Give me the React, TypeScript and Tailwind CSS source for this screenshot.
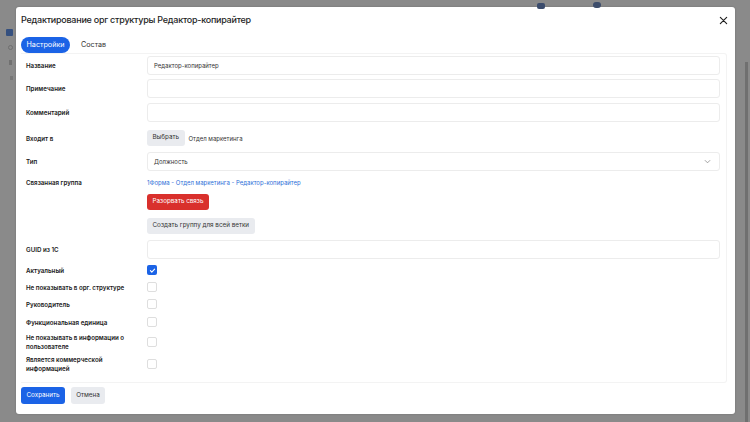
import React from "react";

const font = { fontFamily: "Inter, 'Noto Sans', sans-serif" };

const TextInput = ({ value }: { value?: string }) => (
  <div className="h-[19px] w-full rounded-[3px] border border-[#ececec] flex items-center px-[6px] text-[6px] text-[#333]">
    {value}
  </div>
);

const Check = ({ on }: { on?: boolean }) =>
  on ? (
    <div className="w-[10px] h-[10px] rounded-[2px] bg-[#1b63e6] flex items-center justify-center">
      <svg width="7" height="7" viewBox="0 0 10 10" fill="none">
        <path d="M2 5.2l2 2L8 3" stroke="white" strokeWidth="1.6" strokeLinecap="round" strokeLinejoin="round" />
      </svg>
    </div>
  ) : (
    <div className="w-[10px] h-[10px] rounded-[2px] border border-[#dedede] bg-white" />
  );

const Row = ({
  label,
  h,
  mt,
  children,
  top,
}: {
  label: string;
  h: string;
  mt: string;
  children?: React.ReactNode;
  top?: boolean;
}) => (
  <div className={`grid grid-cols-[126px_1fr] ${h} ${mt} ${top ? "items-start" : "items-center"}`}>
    <div className="pl-[5px] text-[6.2px] font-semibold text-[#1a1a1a] leading-[9px] pr-[10px]">{label}</div>
    <div>{children}</div>
  </div>
);

const Btn = ({ children, tone }: { children: React.ReactNode; tone: "blue" | "red" | "gray" }) => {
  const c =
    tone === "blue"
      ? "bg-[#1b63e6] text-white"
      : tone === "red"
      ? "bg-[#d9302c] text-white"
      : "bg-[#e9ebef] text-[#333]";
  return <div className={`h-[16px] px-[5.5px] rounded-[3px] text-[6.3px] flex items-center ${c}`}>{children}</div>;
};

export default function App() {
  return (
    <div className="w-[750px] h-[422px] bg-[#8a8a8a] relative overflow-hidden" style={font}>
      {/* page behind the overlay */}
      <div className="absolute left-[6px] top-[29px] w-[7px] h-[7px] rounded-[1px] bg-[#35507f]" />
      <div className="absolute left-[8px] top-[45px] w-[5px] h-[5px] rounded-full border border-[#6f6f6f]" />
      <div className="absolute left-[9px] top-[60px] w-[3px] h-[5px] bg-[#707070]" />
      <div className="absolute left-[10px] top-[76px] w-[3px] h-[4px] bg-[#777]" />
      <div className="absolute left-[537px] top-[3px] w-[8px] h-[6px] rounded-[2px] bg-[#3a4b6c]" />
      <div className="absolute left-[593px] top-[2px] w-[8px] h-[6px] rounded-full bg-[#3d4d6b]" />
      <div className="absolute left-[745px] top-[62px] w-[3px] h-[360px] bg-[#707070]" />

      <div className="pl-[16px] pt-[7px] flex">
        <div className="w-[719px] h-[407px] bg-white rounded-[3px] shadow-[0_0_2px_rgba(0,0,0,0.2)] flex flex-col pl-[5px] pr-[8px]">
          <div className="h-[26px] flex items-center justify-between">
            <div className="text-[9px] text-[#1e1e1e] font-medium tracking-[-0.25px]">
              Редактирование орг структуры Редактор-копирайтер
            </div>
            <svg width="9" height="9" viewBox="0 0 10 10" className="mr-[-1px]">
              <path d="M1.5 1.5l7 7M8.5 1.5l-7 7" stroke="#222" strokeWidth="1.3" strokeLinecap="round" />
            </svg>
          </div>

          <div className="mt-[4px] h-[16px] flex items-center gap-[11px]">
            <div className="h-[16px] px-[5.5px] rounded-full bg-[#1b63e6] text-white text-[7.2px] flex items-center">Настройки</div>
            <div className="text-[7.2px] text-[#333]">Состав</div>
          </div>

          <div className="flex flex-col border-t border-r border-b border-[#f3f3f3] rounded-r-[3px] pr-[6px] h-[330px]">
            <Row label="Название" h="h-[19px]" mt="mt-[2px]"><TextInput value="Редактор-копирайтер" /></Row>
            <Row label="Примечание" h="h-[19px]" mt="mt-[4px]"><TextInput /></Row>
            <Row label="Комментарий" h="h-[19px]" mt="mt-[5px]"><TextInput /></Row>
            <Row label="Входит в" h="h-[16px]" mt="mt-[8px]">
              <div className="flex items-center gap-[4px]">
                <Btn tone="gray">Выбрать</Btn>
                <div className="text-[6px] text-[#333]">Отдел маркетинга</div>
              </div>
            </Row>
            <Row label="Тип" h="h-[19px]" mt="mt-[6px]">
              <div className="h-[19px] w-full rounded-[3px] border border-[#ececec] flex items-center justify-between px-[6px] text-[6px] text-[#333]">
                <span>Должность</span>
                <svg width="7" height="5" viewBox="0 0 8 5" className="mr-[2px]">
                  <path d="M1 1l3 3 3-3" stroke="#888" strokeWidth="0.9" fill="none" />
                </svg>
              </div>
            </Row>
            <Row label="Связанная группа" h="h-[57px]" mt="mt-[7px]" top>
              <div className="flex flex-col items-start">
                <div className="text-[6px] text-[#2c6fd8] leading-[9px]">1Форма - Отдел маркетинга - Редактор-копирайтер</div>
                <div className="mt-[7px]"><Btn tone="red">Разорвать связь</Btn></div>
                <div className="mt-[8px]"><Btn tone="gray">Создать группу для всей ветки</Btn></div>
              </div>
            </Row>
            <Row label="GUID из 1С" h="h-[19px]" mt="mt-[5px]"><TextInput /></Row>
            <Row label="Актуальный" h="h-[10px]" mt="mt-[6px]"><Check on /></Row>
            <Row label="Не показывать в орг. структуре" h="h-[10px]" mt="mt-[7px]"><Check /></Row>
            <Row label="Руководитель" h="h-[10px]" mt="mt-[7px]"><Check /></Row>
            <Row label="Функциональная единица" h="h-[10px]" mt="mt-[8px]"><Check /></Row>
            <Row label="Не показывать в информации о пользователе" h="h-[18px]" mt="mt-[6px]"><Check /></Row>
            <Row label="Является коммерческой информацией" h="h-[18px]" mt="mt-[4px]"><Check /></Row>
          </div>

          <div className="flex items-center gap-[6px] pt-[4px]">
            <div className="h-[17px] px-[5.5px] rounded-[3px] bg-[#1b63e6] text-white text-[6.3px] flex items-center">Сохранить</div>
            <div className="h-[17px] px-[5px] rounded-[3px] bg-[#e9ebef] text-[#333] text-[6.3px] flex items-center">Отмена</div>
          </div>
        </div>
      </div>
    </div>
  );
}
